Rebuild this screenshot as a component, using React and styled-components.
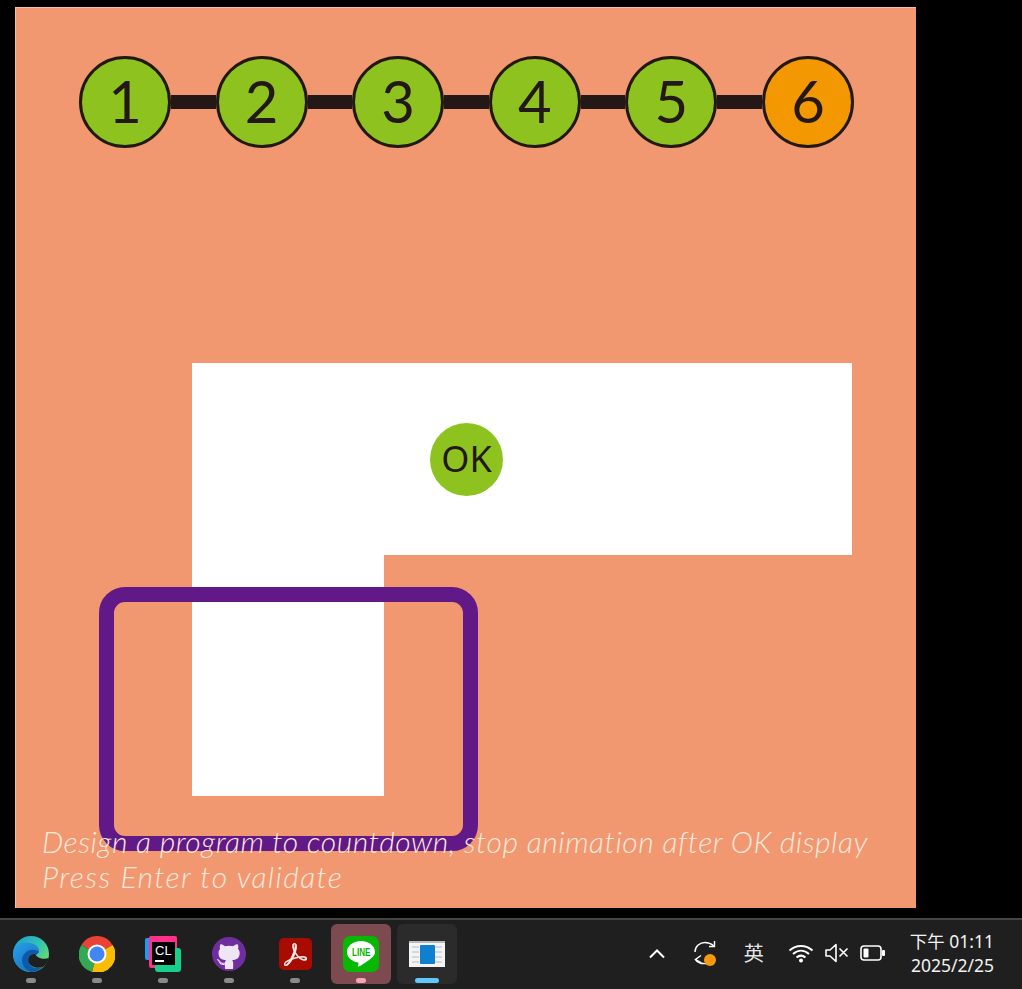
import React from 'react';
import styled, { createGlobalStyle } from 'styled-components';
import { SiAdobeacrobatreader } from 'react-icons/si';
import { FaGithub } from 'react-icons/fa';

const GlobalStyle = createGlobalStyle`
  html, body {
    margin: 0;
    padding: 0;
    background: #000;
  }
`;

const steps = [1, 2, 3, 4, 5, 6];

function Steps() {
  return (
    <StepRow>
      {steps.map((n, i) => (
        <React.Fragment key={n}>
          {i > 0 && <Connector />}
          <Step $last={n === 6}>{n}</Step>
        </React.Fragment>
      ))}
    </StepRow>
  );
}

function EdgeIcon() {
  return (
    <svg width="36" height="36" viewBox="0 0 36 36">
      <defs>
        <linearGradient id="edgeTop" x1="0.1" y1="0" x2="1" y2="0.7">
          <stop offset="0" stopColor="#1f9fd8" />
          <stop offset="0.55" stopColor="#33c3b0" />
          <stop offset="1" stopColor="#72dd68" />
        </linearGradient>
        <linearGradient id="edgeLow" x1="0" y1="0" x2="0.7" y2="1">
          <stop offset="0" stopColor="#2a9fe6" />
          <stop offset="1" stopColor="#1572c8" />
        </linearGradient>
      </defs>
      <circle cx="18" cy="18" r="18" fill="url(#edgeTop)" />
      <path d="M0 17C1 9 9 5 17 7c6 1 10 5 9 9l-4 4-6 7c2 5 4 8 4 9C8 36 0 28 0 17z" fill="url(#edgeLow)" />
      <path d="M12 17c4-4 10-4 14-1l-4 4-6 7c2 5 8 6 14 4-3 3-7 5-12 5-2-1-4-2-6-4-4-5-4-11 0-15z" fill="#0e5aa8" />
      <path d="M36 22c-6 2-12 0-14-4-5 0-8 4-6 9 2 4 8 6 14 4 3-2 5-5 6-9z" fill="#1f1f1f" />
    </svg>
  );
}

function ChromeIcon() {
  return (
    <svg width="36" height="36" viewBox="0 0 36 36">
      <path d="M18 18 2.400 9A18 18 0 0 1 33.600 9z" fill="#ea4335" />
      <path d="M18 18 13 36A18 18 0 0 1 2.400 9z" fill="#34a853" />
      <path d="M18 18 33.600 9A18 18 0 0 1 13 36z" fill="#fbbc04" />
      <circle cx="18" cy="18" r="9.500" fill="#fff" />
      <circle cx="18" cy="18" r="7.500" fill="#4285f4" />
    </svg>
  );
}

function LineIcon() {
  return (
    <svg width="36" height="36" viewBox="0 0 36 36">
      <rect width="36" height="36" rx="7" fill="#06b800" />
      <path d="M18 5C9.700 5 4 10 4 16c0 5.300 4.600 9.500 11 10.400.800.200.700 1-.200 3.400-.200.700.300 1 1 .700 2-1 8-4.600 11.300-7.600C30.600 20.500 32 18.500 32 16 32 10 26.300 5 18 5z" fill="#fff" />
      <LineLabel x="9" y="20" textLength="18.500" lengthAdjust="spacingAndGlyphs">
        LINE
      </LineLabel>
    </svg>
  );
}

function WindowIcon() {
  return (
    <svg width="36" height="26" viewBox="0 0 36 26">
      <rect width="36" height="26" fill="#f2f4f5" />
      <rect width="36" height="2" fill="#b8babc" />
      <rect x="3" y="5" width="7" height="2" fill="#d5d7d9" />
      <rect x="3" y="10" width="7" height="2" fill="#d5d7d9" />
      <rect x="3" y="15" width="7" height="2" fill="#d5d7d9" />
      <rect x="3" y="20" width="7" height="2" fill="#d5d7d9" />
      <rect x="26" y="5" width="7" height="2" fill="#d5d7d9" />
      <rect x="26" y="10" width="7" height="2" fill="#d5d7d9" />
      <rect x="26" y="15" width="7" height="2" fill="#d5d7d9" />
      <rect x="26" y="20" width="7" height="2" fill="#d5d7d9" />
      <rect x="11" y="4" width="15" height="19" rx="1" fill="#0f7fd0" />
    </svg>
  );
}

function GithubIcon() {
  return (
    <GithubTile>
      <FaGithub size={34} color="#6f2da0" />
    </GithubTile>
  );
}

function ClionIcon() {
  return (
    <ClionTile>
      <ClionBlue />
      <ClionPink />
      <ClionGreen />
      <ClionBlack>
        CL
        <ClionBar />
      </ClionBlack>
    </ClionTile>
  );
}

function AcrobatIcon() {
  return (
    <AcrobatTile>
      <SiAdobeacrobatreader size={23} color="#fdeeee" strokeWidth={0.9} />
    </AcrobatTile>
  );
}

const apps = [
  { id: 'edge', Icon: EdgeIcon },
  { id: 'chrome', Icon: ChromeIcon },
  { id: 'clion', Icon: ClionIcon },
  { id: 'github', Icon: GithubIcon },
  { id: 'acrobat', Icon: AcrobatIcon },
  { id: 'line', Icon: LineIcon, state: 'flash' },
  { id: 'window', Icon: WindowIcon, state: 'active' },
];

function Tray() {
  return (
    <TrayRow>
      <svg width="18" height="12" viewBox="0 0 18 12" fill="none" stroke="#fff" strokeWidth="2">
        <path d="M2 10.500 9 3.500l7 7" />
      </svg>
      <SyncWrap>
        <svg width="26" height="26" viewBox="0 0 26 26" fill="none" stroke="#fff" strokeWidth="1.400">
          <path d="M3 12C3 6 8 2.500 13 2.500c3 0 6 1 9 3.500" />
          <path d="M22.500 1v5.500H17" />
          <path d="M9 15.500 3.500 19.500 9 22.500" />
          <path d="M3.500 19.500c2 3 5.500 4.500 11 4" />
        </svg>
        <SyncDot />
      </SyncWrap>
      <ImeLabel>英</ImeLabel>
      <IconGroup>
        <svg width="26" height="20" viewBox="0 0 26 20" fill="none" stroke="#fff" strokeWidth="2">
          <path d="M1.500 7.500C8 1.500 18 1.500 24.500 7.500" />
          <path d="M5 11c5-4.500 11-4.500 16 0" />
          <path d="M8.500 14.500c3-2.500 6-2.500 9 0" />
          <circle cx="13" cy="17.500" r="2" fill="#fff" stroke="none" />
        </svg>
        <svg width="24" height="20" viewBox="0 0 24 20" fill="none" stroke="#fff" strokeWidth="1.600">
          <path d="M1 7v6h4l6 5.500v-17L5 7z" strokeLinejoin="round" />
          <path d="m14.500 5.500 8 8M22.500 5.500l-8 8" />
        </svg>
        <svg width="25" height="16" viewBox="0 0 25 16" fill="none">
          <rect x="1" y="1" width="20" height="14" rx="3" stroke="#fff" strokeWidth="1.600" />
          <rect x="3.500" y="3.500" width="5" height="9" rx="1" fill="#fff" />
          <rect x="22" y="5" width="3" height="6" rx="1" fill="#fff" />
        </svg>
      </IconGroup>
      <Clock>
        <span>下午 01:11</span>
        <span>2025/2/25</span>
      </Clock>
    </TrayRow>
  );
}

export default function App() {
  return (
    <Screen>
      <GlobalStyle />
      <Stage>
        <Panel>
          <Steps />
          <Maze>
            <TopArm>
              <OkBadge>OK</OkBadge>
            </TopArm>
            <LowerArm />
          </Maze>
          <Frame />
          <Caption>
            <CaptionLine $spacing={0.56}>
              Design a program to countdown, stop animation after OK display
            </CaptionLine>
            <CaptionLine $spacing={1.4}>Press Enter to validate</CaptionLine>
          </Caption>
        </Panel>
      </Stage>
      <Taskbar>
        <AppList>
          {apps.map(({ id, Icon, state }) => (
            <AppSlot key={id} $state={state}>
              <Icon />
              <AppDot $state={state} />
            </AppSlot>
          ))}
        </AppList>
        <Tray />
      </Taskbar>
    </Screen>
  );
}

const Screen = styled.div`
  width: 1022px;
  height: 989px;
  background: #000;
  display: flex;
  flex-direction: column;
  overflow: hidden;
`;

const Stage = styled.div`
  height: 918px;
  padding: 7px 0 0 15px;
  box-sizing: border-box;
`;

const Panel = styled.div`
  position: relative;
  width: 901px;
  height: 901px;
  box-sizing: border-box;
  padding: 49px 0 0 64px;
  background: #f19870;
  box-shadow: inset 1px 1px 0 #f7bfa3;
`;

const StepRow = styled.div`
  display: flex;
  align-items: center;
`;

const Step = styled.div`
  width: 92px;
  height: 92px;
  flex: none;
  box-sizing: border-box;
  border: 3px solid #231815;
  border-radius: 50%;
  background: ${({ $last }) => ($last ? '#f39800' : '#8dc21f')};
  color: #231815;
  display: flex;
  align-items: center;
  justify-content: center;
  padding-bottom: 2px;
  font-family: Lato, sans-serif;
  font-size: 58px;
  font-weight: 400;
  line-height: 1;
`;

const Connector = styled.div`
  width: 44.6px;
  height: 14px;
  flex: none;
  background: #231815;
`;

const Maze = styled.div`
  margin: 215px 0 0 113px;
  width: 660px;
`;

const TopArm = styled.div`
  height: 192px;
  background: #fff;
  display: flex;
  align-items: center;
  padding-left: 238px;
  box-sizing: border-box;
`;

const OkBadge = styled.div`
  width: 73px;
  height: 73px;
  border-radius: 50%;
  background: #8dc21f;
  color: #231815;
  display: flex;
  align-items: center;
  justify-content: center;
  font-family: 'Noto Sans', sans-serif;
  font-size: 36px;
  line-height: 1;
`;

const LowerArm = styled.div`
  width: 192px;
  height: 241px;
  background: #fff;
`;

const Frame = styled.div`
  position: absolute;
  left: 84px;
  top: 580px;
  width: 379px;
  height: 264px;
  box-sizing: border-box;
  border: 15px solid #601986;
  border-radius: 26px;
`;

const Caption = styled.div`
  position: absolute;
  left: 27px;
  top: 817px;
  color: #fde9de;
  font-family: Lato, sans-serif;
  font-style: italic;
  font-weight: 300;
  font-size: 30px;
  line-height: 35px;
  white-space: nowrap;
`;

const CaptionLine = styled.div`
  letter-spacing: ${({ $spacing }) => $spacing}px;
`;

const Taskbar = styled.div`
  height: 71px;
  box-sizing: border-box;
  border-top: 2px solid #454545;
  background: #1f1f1f;
  display: flex;
  justify-content: space-between;
`;

const AppList = styled.div`
  display: flex;
  align-items: flex-start;
  gap: 6px;
  padding: 4px 0 0 1px;
`;

const AppSlot = styled.div`
  position: relative;
  width: 60px;
  height: 60px;
  border-radius: 6px;
  display: flex;
  align-items: center;
  justify-content: center;
  background: ${({ $state }) =>
    $state === 'flash' ? '#7d4a50' : $state === 'active' ? '#2b2b2b' : 'transparent'};
`;

const AppDot = styled.span`
  position: absolute;
  bottom: 1px;
  left: 50%;
  transform: translateX(-50%);
  height: 5px;
  border-radius: 3px;
  width: ${({ $state }) => ($state === 'active' ? '24px' : '10px')};
  background: ${({ $state }) =>
    $state === 'active' ? '#60c8fa' : $state === 'flash' ? '#f4a6b4' : '#8a8a8a'};
`;

const ClionTile = styled.div`
  position: relative;
  width: 36px;
  height: 36px;
`;

const ClionBlue = styled.span`
  position: absolute;
  left: 0;
  top: 2px;
  width: 20px;
  height: 22px;
  border-radius: 2px;
  background: #1e9bf0;
`;

const ClionPink = styled.span`
  position: absolute;
  left: 4px;
  top: 0;
  width: 28px;
  height: 32px;
  border-radius: 2px;
  background: #ff318c;
`;

const ClionGreen = styled.span`
  position: absolute;
  right: 0;
  bottom: 0;
  width: 26px;
  height: 24px;
  border-radius: 3px;
  background: #16d08a;
`;

const ClionBlack = styled.span`
  position: absolute;
  left: 7px;
  top: 6px;
  width: 23px;
  height: 23px;
  padding: 2px 0 0 3px;
  box-sizing: border-box;
  background: #000;
  color: #fff;
  font-family: 'Liberation Sans', sans-serif;
  font-size: 13px;
  line-height: 13px;
`;

const ClionBar = styled.span`
  position: absolute;
  left: 3px;
  bottom: 3px;
  width: 9px;
  height: 2px;
  background: #fff;
`;

const GithubTile = styled.div`
  width: 34px;
  height: 34px;
  border-radius: 50%;
  display: flex;
  background: radial-gradient(circle, #efe6f5 0 62%, #6f2da0 63%);
`;

const AcrobatTile = styled.div`
  width: 33px;
  height: 32px;
  border-radius: 5px;
  background: #a80c00;
  display: flex;
  align-items: center;
  justify-content: center;
`;

const LineLabel = styled.text`
  font-family: 'Liberation Sans', sans-serif;
  font-size: 11px;
  font-weight: 700;
  fill: #06b800;
`;

const TrayRow = styled.div`
  display: flex;
  align-items: center;
  padding: 0 28px 4px 0;
  color: #fff;
  svg {
    display: block;
  }
`;

const SyncWrap = styled.div`
  position: relative;
  width: 26px;
  height: 26px;
  margin-left: 26px;
`;

const SyncDot = styled.span`
  position: absolute;
  right: 2px;
  bottom: 0;
  width: 12px;
  height: 12px;
  border-radius: 50%;
  background: #f79a0e;
`;

const ImeLabel = styled.span`
  margin-left: 26px;
  font-family: 'Noto Sans CJK TC', sans-serif;
  font-size: 20px;
  color: #e6e6e6;
  line-height: 1;
`;

const IconGroup = styled.div`
  display: flex;
  align-items: center;
  gap: 11px;
  margin-left: 24px;
`;

const Clock = styled.div`
  display: flex;
  flex-direction: column;
  align-items: flex-end;
  margin-left: 25px;
  font-family: 'Noto Sans', 'Noto Sans CJK TC', sans-serif;
  font-size: 17.5px;
  line-height: 24px;
  color: #f2f2f2;
`;
